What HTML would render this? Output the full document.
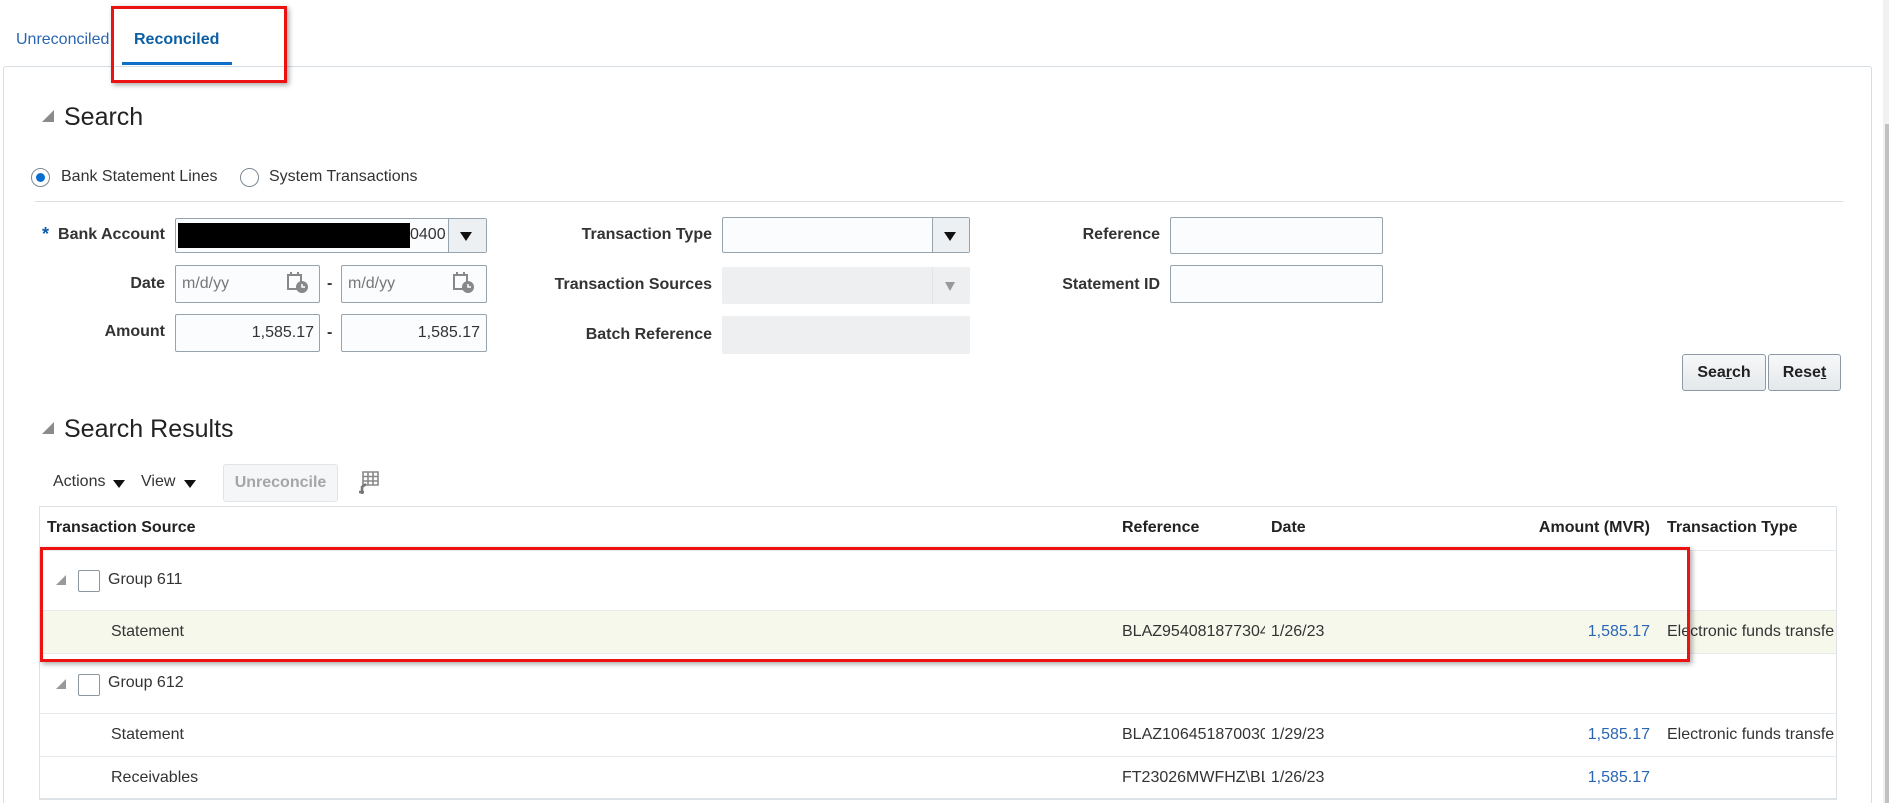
<!DOCTYPE html>
<html style="width:1889px;height:803px;overflow:hidden"><head><meta charset="utf-8"><style>
*{margin:0;padding:0;box-sizing:border-box}
body{width:1889px;height:803px;background:#fff;position:relative;overflow:hidden;font-family:"Liberation Sans",Arial,sans-serif;color:#333}
.a{position:absolute;white-space:nowrap}
.lbl{font-weight:bold;font-size:16px;color:#333;text-align:right}
.inp{position:absolute;border:1px solid #97a4ad;border-radius:2px;background:#fbfcfd}
.dis{position:absolute;background:#eeeff0;border-radius:2px}
.tri{position:absolute;width:0;height:0;border-left:12px solid transparent;border-bottom:12px solid #8a8a8a}
.t{font-size:16px;color:#333}
.blue{color:#2b66b1}
.hline{position:absolute;left:39px;width:1797px;height:1px;background:#e8ebee}
.cb{position:absolute;width:22px;height:22px;border:1px solid #8d979f;border-radius:2px;background:#fff}
</style></head><body>
<div class="a" style="left:16px;top:31px;font-size:16px;color:#2b66b1">Unreconciled</div>
<div class="a" style="left:134px;top:31px;font-size:16px;color:#0b5fa5;font-weight:bold">Reconciled</div>
<div class="a" style="left:122px;top:62px;width:110px;height:3px;background:#0f6ec9"></div>
<div class="a" style="left:3px;top:66px;width:1869px;height:737px;border:1px solid #d6dde3;border-bottom:none;border-radius:3px 3px 0 0"></div>
<div class="a" style="left:1883px;top:0;width:6px;height:803px;background:#f1f1f1"></div>
<div class="a" style="left:1885px;top:124px;width:4px;height:679px;background:#c1c1c1"></div>
<div class="a" style="left:111px;top:6px;width:176px;height:77px;border:3px solid #ee1111;box-shadow:2px 2px 5px rgba(0,0,0,.35)"></div>
<div class="tri" style="left:42px;top:110px"></div>
<div class="a" style="left:64px;top:103px;font-size:25px;color:#222">Search</div>
<div class="a" style="left:31px;top:168px;width:19px;height:19px;border:1px solid #7d8890;border-radius:50%"></div>
<div class="a" style="left:36px;top:173px;width:9px;height:9px;background:#0a6ed1;border-radius:50%"></div>
<div class="a t" style="left:61px;top:168px;font-size:16px">Bank Statement Lines</div>
<div class="a" style="left:240px;top:168px;width:19px;height:19px;border:1px solid #7d8890;border-radius:50%"></div>
<div class="a t" style="left:269px;top:168px;font-size:16px">System Transactions</div>
<div class="a" style="left:35px;top:201px;width:1808px;height:1px;background:#d8dde2"></div>
<div class="a" style="left:42px;top:224px;color:#0a5bab;font-size:18px;font-weight:bold">*</div>
<div class="a lbl" style="right:1724px;top:226px">Bank Account</div>
<div class="inp" style="left:175px;top:218px;width:312px;height:35px"></div>
<div class="a" style="left:178px;top:223px;width:232px;height:25px;background:#000"></div>
<div class="a t" style="left:410px;top:226px;width:37px;overflow:hidden">0400</div>
<div class="a" style="left:448px;top:219px;width:38px;height:33px;background:#edf0f2;border-left:1px solid #97a4ad"></div>
<div class="a" style="left:460px;top:232px;border-left:6px solid transparent;border-right:6px solid transparent;border-top:9px solid #111"></div>
<div class="a lbl" style="right:1724px;top:275px">Date</div>
<div class="inp" style="left:175px;top:265px;width:145px;height:38px"></div>
<div class="a" style="left:182px;top:275px;font-size:16px;color:#777">m/d/yy</div>
<svg class="a" style="left:287px;top:272px" width="22" height="22" viewBox="0 0 22 22"><rect x="1" y="3" width="13" height="14" fill="none" stroke="#888" stroke-width="2"/><rect x="3" y="0" width="2" height="4" fill="#888"/><rect x="10" y="0" width="2" height="4" fill="#888"/><circle cx="15" cy="15" r="6" fill="#888"/><path d="M15 12v3h3" stroke="#fff" stroke-width="1.5" fill="none"/></svg>
<div class="a t" style="left:327px;top:275px;font-weight:bold">-</div>
<div class="inp" style="left:341px;top:265px;width:146px;height:38px"></div>
<div class="a" style="left:348px;top:275px;font-size:16px;color:#777">m/d/yy</div>
<svg class="a" style="left:453px;top:272px" width="22" height="22" viewBox="0 0 22 22"><rect x="1" y="3" width="13" height="14" fill="none" stroke="#888" stroke-width="2"/><rect x="3" y="0" width="2" height="4" fill="#888"/><rect x="10" y="0" width="2" height="4" fill="#888"/><circle cx="15" cy="15" r="6" fill="#888"/><path d="M15 12v3h3" stroke="#fff" stroke-width="1.5" fill="none"/></svg>
<div class="a lbl" style="right:1724px;top:323px">Amount</div>
<div class="inp" style="left:175px;top:314px;width:145px;height:38px"></div>
<div class="a t" style="right:1575px;top:324px">1,585.17</div>
<div class="a t" style="left:327px;top:324px;font-weight:bold">-</div>
<div class="inp" style="left:341px;top:314px;width:146px;height:38px"></div>
<div class="a t" style="right:1409px;top:324px">1,585.17</div>
<div class="a lbl" style="right:1177px;top:226px">Transaction Type</div>
<div class="inp" style="left:722px;top:217px;width:248px;height:36px"></div>
<div class="a" style="left:932px;top:218px;width:37px;height:34px;background:#edf0f2;border-left:1px solid #97a4ad"></div>
<div class="a" style="left:944px;top:232px;border-left:6px solid transparent;border-right:6px solid transparent;border-top:9px solid #111"></div>
<div class="a lbl" style="right:1177px;top:276px">Transaction Sources</div>
<div class="dis" style="left:722px;top:267px;width:248px;height:37px"></div>
<div class="a" style="left:932px;top:267px;width:1px;height:37px;background:#e2e4e6"></div>
<div class="a" style="left:945px;top:282px;border-left:5px solid transparent;border-right:5px solid transparent;border-top:9px solid #999"></div>
<div class="a lbl" style="right:1177px;top:326px">Batch Reference</div>
<div class="dis" style="left:722px;top:316px;width:248px;height:38px"></div>
<div class="a lbl" style="right:729px;top:226px">Reference</div>
<div class="inp" style="left:1170px;top:217px;width:213px;height:37px"></div>
<div class="a lbl" style="right:729px;top:276px">Statement ID</div>
<div class="inp" style="left:1170px;top:265px;width:213px;height:38px"></div>
<div class="a" style="left:1682px;top:354px;width:84px;height:37px;border:1px solid #8d9aa5;border-radius:3px;background:linear-gradient(#f7f8f9,#e4e8eb);font-weight:bold;font-size:16px;text-align:center;line-height:35px;color:#222">Sea<u>r</u>ch</div>
<div class="a" style="left:1768px;top:354px;width:73px;height:37px;border:1px solid #8d9aa5;border-radius:3px;background:linear-gradient(#f7f8f9,#e4e8eb);font-weight:bold;font-size:16px;text-align:center;line-height:35px;color:#222">Rese<u>t</u></div>
<div class="tri" style="left:42px;top:422px"></div>
<div class="a" style="left:64px;top:415px;font-size:25px;color:#222">Search Results</div>
<div class="a t" style="left:53px;top:473px">Actions</div>
<div class="a" style="left:113px;top:480px;border-left:6px solid transparent;border-right:6px solid transparent;border-top:8px solid #111"></div>
<div class="a t" style="left:141px;top:473px">View</div>
<div class="a" style="left:184px;top:480px;border-left:6px solid transparent;border-right:6px solid transparent;border-top:8px solid #111"></div>
<div class="a" style="left:223px;top:464px;width:115px;height:38px;border:1px solid #e1e5e8;border-radius:3px;background:#f4f6f7;color:#a6a6a6;font-weight:bold;font-size:16px;text-align:center;line-height:36px">Unreconcile</div>
<svg class="a" style="left:356px;top:471px" width="24" height="24" viewBox="0 0 24 24"><path d="M7 1h15v13H7z M7 5.5h15 M7 10h15 M12 1v13 M17 1v13" stroke="#888" stroke-width="1.6" fill="none"/><path d="M10 13l-4 3v7" stroke="#777" stroke-width="2.5" fill="none"/><path d="M3 21h5" stroke="#777" stroke-width="2.5"/></svg>
<div class="a" style="left:39px;top:506px;width:1798px;height:294px;border:1px solid #dde2e6;border-bottom:2px solid #dde2e6"></div>
<div class="a t" style="left:47px;top:519px;font-weight:bold;color:#222">Transaction Source</div>
<div class="a t" style="left:1122px;top:519px;font-weight:bold;color:#222">Reference</div>
<div class="a t" style="left:1271px;top:519px;font-weight:bold;color:#222">Date</div>
<div class="a t" style="right:239px;top:519px;font-weight:bold;color:#222">Amount (MVR)</div>
<div class="a t" style="left:1667px;top:519px;font-weight:bold;color:#222">Transaction Type</div>
<div class="hline" style="top:550px"></div>
<div class="tri" style="left:56px;top:575px;border-left-width:10px;border-bottom-width:10px;border-bottom-color:#999"></div>
<div class="cb" style="left:78px;top:570px"></div>
<div class="a t" style="left:108px;top:571px">Group 611</div>
<div class="hline" style="top:610px"></div>
<div class="a" style="left:40px;top:611px;width:1796px;height:42px;background:#f7f8ec"></div>
<div class="a t" style="left:111px;top:623px">Statement</div>
<div class="a t" style="left:1122px;top:623px;width:143px;overflow:hidden">BLAZ95408187730488</div>
<div class="a t" style="left:1271px;top:623px">1/26/23</div>
<div class="a t blue" style="right:239px;top:623px">1,585.17</div>
<div class="a t" style="left:1667px;top:623px;width:168px;overflow:hidden">Electronic funds transfer</div>
<div class="hline" style="top:653px"></div>
<div class="tri" style="left:56px;top:679px;border-left-width:10px;border-bottom-width:10px;border-bottom-color:#999"></div>
<div class="cb" style="left:78px;top:674px"></div>
<div class="a t" style="left:108px;top:674px">Group 612</div>
<div class="hline" style="top:713px"></div>
<div class="a t" style="left:111px;top:726px">Statement</div>
<div class="a t" style="left:1122px;top:726px;width:143px;overflow:hidden">BLAZ10645187003088</div>
<div class="a t" style="left:1271px;top:726px">1/29/23</div>
<div class="a t blue" style="right:239px;top:726px">1,585.17</div>
<div class="a t" style="left:1667px;top:726px;width:168px;overflow:hidden">Electronic funds transfer</div>
<div class="hline" style="top:756px"></div>
<div class="a t" style="left:111px;top:769px">Receivables</div>
<div class="a t" style="left:1122px;top:769px;width:143px;overflow:hidden">FT23026MWFHZ\BLAZ</div>
<div class="a t" style="left:1271px;top:769px">1/26/23</div>
<div class="a t blue" style="right:239px;top:769px">1,585.17</div>
<div class="a" style="left:40px;top:547px;width:1650px;height:115px;border:3px solid #ee1111;box-shadow:2px 2px 5px rgba(0,0,0,.35)"></div>
</body></html>
